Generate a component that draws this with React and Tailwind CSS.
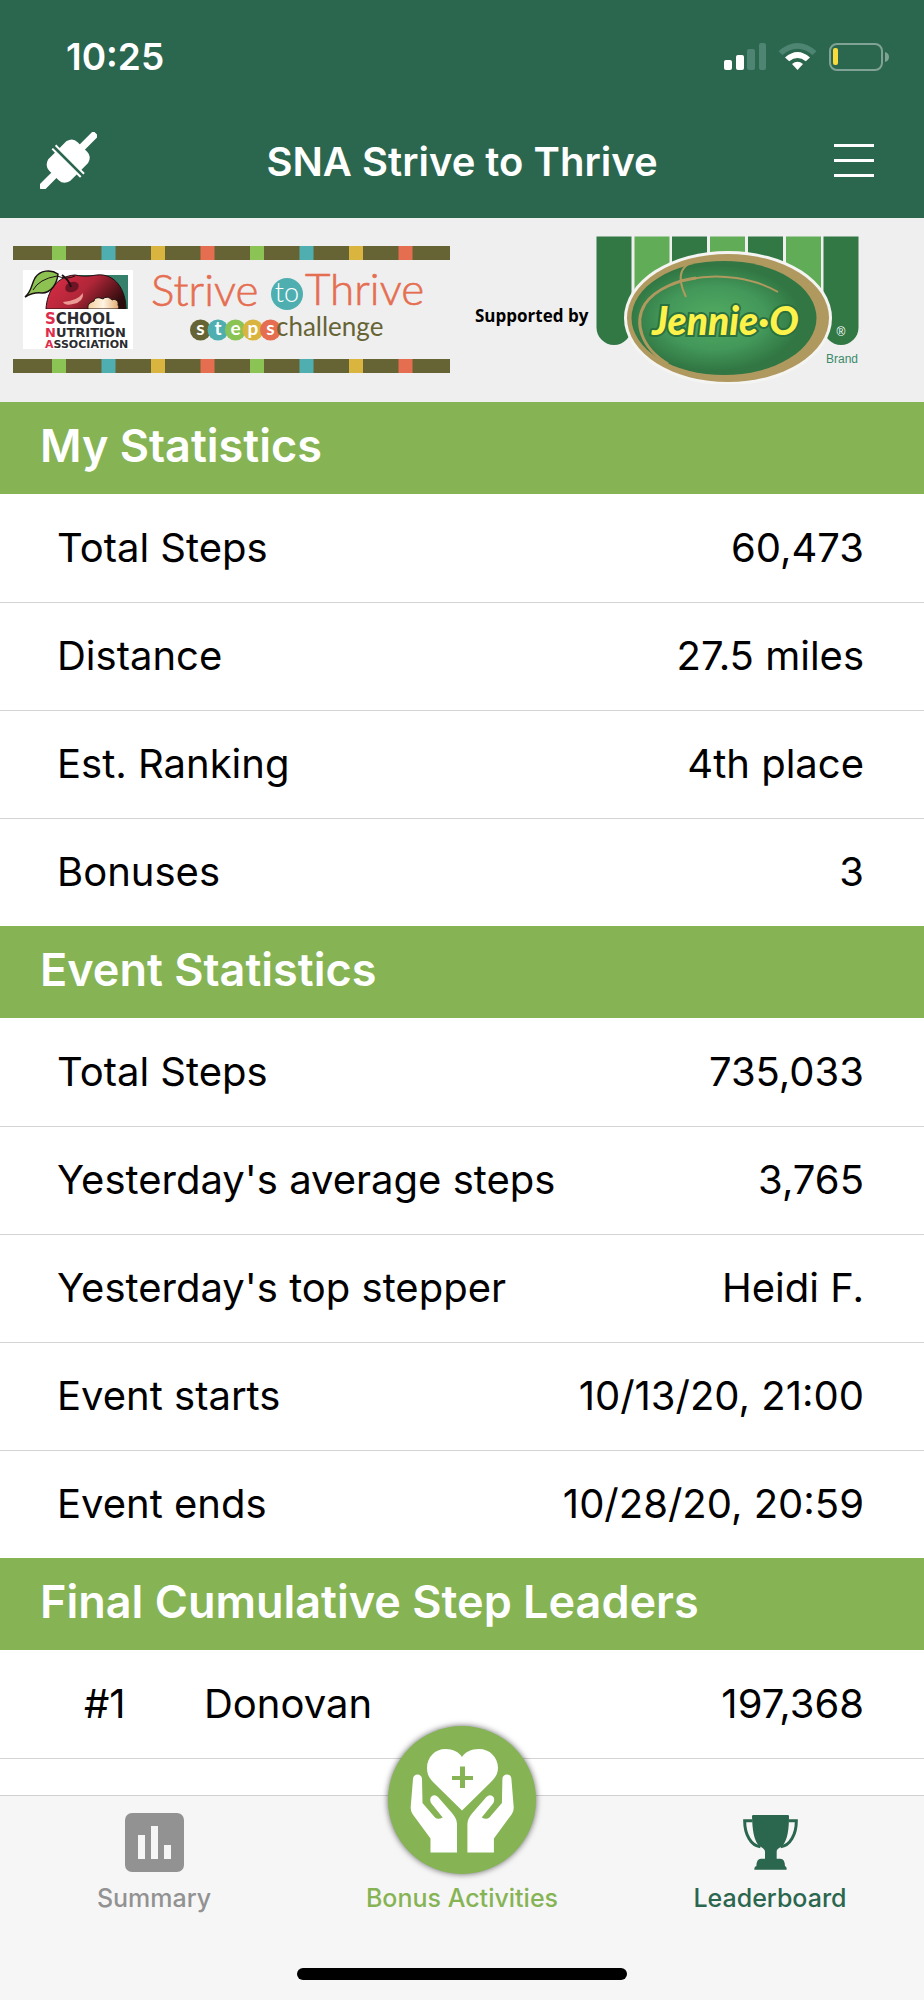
import React from "react";

const myStats = [
  { label: "Total Steps", value: "60,473" },
  { label: "Distance", value: "27.5 miles" },
  { label: "Est. Ranking", value: "4th place" },
  { label: "Bonuses", value: "3" },
];

const eventStats = [
  { label: "Total Steps", value: "735,033" },
  { label: "Yesterday's average steps", value: "3,765" },
  { label: "Yesterday's top stepper", value: "Heidi F." },
  { label: "Event starts", value: "10/13/20, 21:00" },
  { label: "Event ends", value: "10/28/20, 20:59" },
];

const leaders = [{ rank: "#1", name: "Donovan", steps: "197,368" }];

const stripes = ["#8bc455", "#4fafb0", "#d9b53f", "#e56e51"];

const stepLetters = [
  { letter: "s", color: "#666434" },
  { letter: "t", color: "#4fafb0" },
  { letter: "e", color: "#8bc455" },
  { letter: "p", color: "#d9b53f" },
  { letter: "s", color: "#e56e51" },
];

const StatusIcons = () => (
  <svg width="166" height="30" viewBox="0 0 166 30" aria-hidden="true">
    <rect x="0" y="18" width="8" height="10" rx="2" fill="#fff" />
    <rect x="12" y="13" width="8" height="15" rx="2" fill="#fff" />
    <rect x="23" y="7" width="8" height="21" rx="2" fill="#4d8572" />
    <rect x="35" y="1" width="7" height="27" rx="2" fill="#4d8572" />
    <path d="M54.5 9.2Q73.5 -7.2 92.5 9.2L88.5 13Q73.5 0.4 58.5 13Z" fill="#4d8572" />
    <path d="M61 15.5Q73.5 4.5 86 15.5L81.8 19.3Q73.5 12.5 65.2 19.3Z" fill="#fff" />
    <path d="M68 22Q73.5 17.3 79 22L73.5 28Z" fill="#fff" />
    <rect x="106" y="2" width="52" height="26" rx="7" fill="none" stroke="#80a395" strokeWidth="2" />
    <rect x="109" y="6" width="5" height="17" rx="2" fill="#fadb3c" />
    <path d="M161 10Q165 11 165 15Q165 19 161 20Z" fill="#80a395" />
  </svg>
);

const PlugIcon = () => (
  <svg width="57" height="57" viewBox="0 0 170 170" fill="#fff" aria-hidden="true">
    <g transform="translate(84 87) rotate(-45)">
      <rect x="50" y="-11" width="67" height="22" rx="4" />
      <path d="M4 -60H10V-46H38Q60 -40 60 -20V20Q60 40 38 46H10V60H4Z" />
      <rect x="-117" y="-11" width="67" height="22" rx="4" />
      <path d="M-4 -60H-10V-46H-38Q-60 -40 -60 -20V20Q-60 40 -38 46H-10V60H-4Z" />
    </g>
  </svg>
);

const EventLogo = () => (
  <svg
    width="438"
    height="128"
    viewBox="0 0 438 128"
    role="img"
    aria-label="School Nutrition Association Strive to Thrive steps challenge"
    className="shrink-0"
  >
    <defs>
      <linearGradient id="apple" x1="0" x2="1" y1="0.2" y2="0.6">
        <stop offset="0" stopColor="#d92c45" />
        <stop offset="0.5" stopColor="#b02638" />
        <stop offset="1" stopColor="#2c0b0c" />
      </linearGradient>
      <linearGradient id="bite" x1="0" x2="1">
        <stop offset="0" stopColor="#f3cf9c" />
        <stop offset="0.5" stopColor="#fff4e2" />
        <stop offset="1" stopColor="#e2a96e" />
      </linearGradient>
      <clipPath id="appleBox">
        <rect x="32" y="28" width="83" height="35" />
      </clipPath>
    </defs>

    {[0, 113].map((y) => (
      <g key={y}>
        <rect x="0" y={y} width="437" height="14" fill="#666434" />
        {[...stripes, ...stripes].map((color, i) => (
          <rect key={i} x={39 + i * 49.5} y={y} width="14" height="14" fill={color} />
        ))}
      </g>
    ))}

    {/* association logo */}
    <rect x="10" y="24" width="110" height="79" fill="#fff" />
    <rect x="60" y="29" width="55" height="34" fill="#35806a" />
    <g clipPath="url(#appleBox)">
      <path
        d="M33 63C34 45 44 30 62 29C72 31 76 30 84 29C102 27 113 44 113 63Z"
        fill="url(#apple)"
        stroke="#1c1113"
        strokeWidth="1"
      />
      <path
        d="M75 63C74 57 79 56 81 55C82 50 88 52 90 53C94 49 98 53 99 54C103 52 106 56 105 59Q107 61 105 63Z"
        fill="url(#bite)"
        stroke="#1c1113"
        strokeWidth="1"
      />
      <path d="M50 56Q64 55 70 47Q71 56 60 58Q52 60 50 56Z" fill="#eb9a95" />
    </g>
    <ellipse cx="59" cy="41" rx="7" ry="5" fill="#6f1425" transform="rotate(-20 59 41)" />
    <path d="M49 29Q56 34 58 41" fill="none" stroke="#1c1113" strokeWidth="2" />
    <path
      d="M12 51C19 45 18 39 22 32C27 24 38 23 45 28C44 38 38 47 29 47C22 46 17 48 12 51Z"
      fill="#8dc252"
      stroke="#1c1113"
      strokeWidth="1.5"
    />
    <path d="M20 44Q26 33 44 30Q54 34 62 30" fill="none" stroke="#1c1113" strokeWidth="1" />
    <g fill="#2b2b2f" fontFamily="'DejaVu Sans', sans-serif" fontWeight="700">
      <text x="32" y="78" fontSize="15"><tspan fill="#de2c4c">S</tspan>CHOOL</text>
      <text x="32" y="91" fontSize="13"><tspan fill="#de2c4c">N</tspan>UTRITION</text>
      <text x="32" y="102" fontSize="11"><tspan fill="#de2c4c">A</tspan>SSOCIATION</text>
    </g>

    {/* event name */}
    <g fontFamily="Lato, sans-serif">
      <g fill="#e56e51" stroke="#e56e51" strokeWidth="0.6" fontSize="44" fontWeight="300">
        <text x="138" y="60">Strive</text>
        <text x="292" y="59">Thrive</text>
      </g>
      <circle cx="274" cy="48" r="16" fill="#4fafb0" />
      <text x="274" y="56" fontSize="27" fontWeight="300" fill="#fff" textAnchor="middle">
        to
      </text>
      {stepLetters.map((item, i) => (
        <g key={i}>
          <circle cx={187.5 + i * 17.5} cy="84" r="10.5" fill={item.color} />
          <text
            x={187.5 + i * 17.5}
            y="89"
            fontSize="19"
            fontWeight="700"
            fill="#fff"
            textAnchor="middle"
          >
            {item.letter}
          </text>
        </g>
      ))}
      <text x="263" y="90" fontSize="26" fill="#666434">challenge</text>
    </g>
  </svg>
);

const SponsorLogo = () => (
  <svg
    width="264"
    height="148"
    viewBox="596 236 264 148"
    role="img"
    aria-label="Jennie-O Brand"
    className="shrink-0"
  >
    <defs>
      <radialGradient id="badge" cx="0.45" cy="0.5" r="0.55">
        <stop offset="0" stopColor="#52ab60" />
        <stop offset="0.5" stopColor="#43985a" />
        <stop offset="0.85" stopColor="#317643" />
        <stop offset="1" stopColor="#317643" />
      </radialGradient>
    </defs>
    <path d="M596.5 236.5H631.5V327.5A17.5 17.5 0 0 1 596.5 327.5Z" fill="#317845" />
    <path d="M823.5 236.5H858.5V327.5A17.5 17.5 0 0 1 823.5 327.5Z" fill="#317845" />
    <rect x="634.5" y="236.5" width="35" height="58" fill="#61ad57" />
    <rect x="672" y="236.5" width="35" height="40" fill="#317845" />
    <rect x="710" y="236.5" width="35" height="40" fill="#61ad57" />
    <rect x="748" y="236.5" width="35" height="40" fill="#317845" />
    <rect x="786" y="236.5" width="35" height="55" fill="#61ad57" />
    <ellipse cx="728" cy="318" rx="104" ry="67" fill="#f4f4f2" />
    <ellipse cx="728" cy="318" rx="101" ry="64" fill="#b0995f" />
    <ellipse cx="724" cy="318" rx="92.5" ry="57" fill="url(#badge)" />
    <g fill="none" stroke="#b0995f">
      <path d="M668 364C640 347 634 322 645 304C656 288 680 280 696 278" strokeWidth="3" />
      <path d="M690 279C720 273 754 278 778 292" strokeWidth="2" />
      <path d="M708 258C678 262 676 276 686 297" strokeWidth="2" />
    </g>
    <text
      x="652"
      y="335"
      fontSize="39"
      fontWeight="900"
      fontStyle="italic"
      fontFamily="Lato, sans-serif"
      fill="#fdf24a"
      stroke="#2b7040"
      strokeWidth="4"
      paintOrder="stroke"
    >
      Jennie·O
    </text>
    <text x="841" y="336" fontSize="12" fill="#fff" textAnchor="middle" fontFamily="'Liberation Sans', sans-serif">
      ®
    </text>
    <text x="826" y="363" fontSize="12" fill="#3b8a6a" fontFamily="'Liberation Sans', sans-serif">
      Brand
    </text>
  </svg>
);

const SummaryIcon = () => (
  <svg width="59" height="59" viewBox="0 0 59 59" aria-hidden="true">
    <rect width="59" height="59" rx="7" fill="#929292" />
    <path d="M13 22H20V46H13ZM26 13H33V46H26ZM39 32H46V46H39Z" fill="#f6f6f6" />
  </svg>
);

const TrophyIcon = () => (
  <svg width="55" height="59" viewBox="0 -6 165 177" fill="#2b664f" aria-hidden="true">
    <path d="M27 4Q27 0 31 0H134Q138 0 138 4C138 45 133 72 122 88C114 98 101 100 101 110V131H112Q126 132 126 154Q131 154 131 164H34Q34 154 40 154Q40 132 54 131H66V110C66 100 52 98 44 88C33 72 28 45 27 4Z" />
    <path
      d="M28 17H5C5 58 24 93 52 95M137 17H160C160 58 141 93 113 95"
      fill="none"
      stroke="#2b664f"
      strokeWidth="9"
    />
  </svg>
);

const Hand = () => (
  <path d="M25 53C25 47 34 47 34 53L34.5 77L47 91.5Q50 94 54.7 91.5L43 77Q41 72 44 70Q47 68 50 71L64 87Q69 93 69 98V126.5H42.5V112.5L24.5 88Q22.5 85 22.7 81Z" />
);

const BonusIcon = () => (
  <svg width="148" height="148" viewBox="0 0 148 148" fill="#fff" aria-hidden="true">
    <path d="M74 84.5L46 57C41 52 39 48 39 42C39 31 47 23 57.5 23C65 23 71 26 74 31C77 26 83 23 91 23C101.5 23 110 31 110 42C110 48 107 52 102 57Z" />
    <path d="M72 40.5H77V50H85V54H77V62H72V54H64V50H72Z" fill="#86b455" />
    <Hand />
    <g transform="translate(148.4 0) scale(-1 1)">
      <Hand />
    </g>
  </svg>
);

const SectionTitle = ({ children }) => (
  <h2 className="flex h-[92px] items-center bg-[#86b455] px-10 pb-1 text-[45px] font-semibold text-white">
    {children}
  </h2>
);

const StatsTable = ({ rows }) => (
  <table className="w-full text-[40px]">
    <tbody>
      {rows.map((row) => (
        <tr key={row.label} className="h-[108px] border-b border-[#d4d4d6] last:border-0">
          <th scope="row" className="pl-[57px] text-left font-normal">
            {row.label}
          </th>
          <td className="pr-[60px] text-right">{row.value}</td>
        </tr>
      ))}
    </tbody>
  </table>
);

const App = () => {
  return (
    <div className="flex min-h-screen w-full flex-col bg-white font-['Inter',sans-serif] text-black">
      <header className="bg-[#2b664f] text-white">
        <div className="flex h-[114px] items-center justify-between pl-[66px] pr-[34px]">
          <span className="text-[37px] font-semibold">10:25</span>
          <StatusIcons />
        </div>
        <div className="flex h-[104px] items-center justify-between px-10 pb-3">
          <button type="button" aria-label="Connect device" className="w-[60px]">
            <PlugIcon />
          </button>
          <h1 className="pt-1 text-[40px] font-semibold">SNA Strive to Thrive</h1>
          <button type="button" aria-label="Menu" className="flex w-[60px] flex-col items-center gap-3">
            <span className="h-[3px] w-10 bg-white" />
            <span className="h-[3px] w-10 bg-white" />
            <span className="h-[3px] w-10 bg-white" />
          </button>
        </div>
      </header>

      <main className="flex-1">
        <div className="flex h-[184px] items-center bg-[#efefef] pl-[13px]">
          <EventLogo />
          <p className="w-[145px] shrink-0 pl-6 pt-3 text-[17px] font-bold whitespace-nowrap font-['Open_Sans',sans-serif]">
            Supported by
          </p>
          <SponsorLogo />
        </div>

        <SectionTitle>My Statistics</SectionTitle>
        <StatsTable rows={myStats} />

        <SectionTitle>Event Statistics</SectionTitle>
        <StatsTable rows={eventStats} />

        <SectionTitle>Final Cumulative Step Leaders</SectionTitle>
        <table className="w-full text-[40px]">
          <tbody>
            {leaders.map((leader) => (
              <tr key={leader.rank} className="h-[108px] border-b border-[#d4d4d6]">
                <td className="w-[204px] pl-[84px]">{leader.rank}</td>
                <th scope="row" className="text-left font-normal">
                  {leader.name}
                </th>
                <td className="pr-[60px] text-right">{leader.steps}</td>
              </tr>
            ))}
          </tbody>
        </table>
      </main>

      <nav className="border-t border-[#d0d0d0] bg-[#f6f6f6] text-[25px] leading-8 font-medium">
        <div className="flex h-[172px] items-start">
          <a href="#summary" className="flex flex-1 flex-col items-center gap-2.5 pt-[17px] text-[#929292]">
            <SummaryIcon />
            Summary
          </a>
          <a href="#bonus" className="-mt-[70px] flex flex-1 flex-col items-center gap-2 text-[#86b455]">
            <span className="rounded-full bg-[#86b455] shadow-[0_0_6px_rgba(0,0,0,0.6)]">
              <BonusIcon />
            </span>
            Bonus Activities
          </a>
          <a href="#leaderboard" className="flex flex-1 flex-col items-center gap-2.5 pt-[17px] text-[#2b664f]">
            <TrophyIcon />
            Leaderboard
          </a>
        </div>
        <div className="mx-auto mb-5 h-3 w-[330px] rounded-full bg-black" />
      </nav>
    </div>
  );
};

export default App;
